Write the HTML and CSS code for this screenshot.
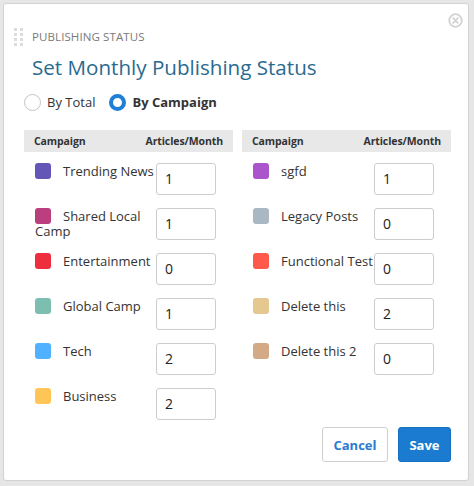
FILE: index.html
```html
<!DOCTYPE html>
<html>
<head>
<meta charset="utf-8">
<link rel="stylesheet" href="styles.css">
</head>
<body>
<div class="dialog">
  <button class="close" aria-label="Close">
    <svg width="15" height="15" viewBox="0 0 15 15"><circle cx="7.5" cy="7.5" r="6.3" fill="none" stroke="#d2d2d2" stroke-width="1.8"/><path d="M5.2 5.2 L9.8 9.8 M9.8 5.2 L5.2 9.8" stroke="#d2d2d2" stroke-width="1.8" stroke-linecap="round"/></svg>
  </button>
  <div class="head">
    <div class="handle"><i></i><i></i><i></i><i></i><i></i><i></i><i></i><i></i></div>
    <div class="kicker">PUBLISHING STATUS</div>
  </div>
  <h1 class="title">Set Monthly Publishing Status</h1>
  <div class="radios">
    <label class="radio"><span class="dot"></span>By Total</label>
    <label class="radio on"><span class="dot"></span>By Campaign</label>
  </div>
  <div class="tables">
    <div class="table">
      <div class="thead"><span>Campaign</span><span>Articles/Month</span></div>
      <div class="row"><div class="name"><span class="sw" style="background:#6356b6"></span>Trending News</div><div class="inp">1</div></div>
      <div class="row"><div class="name"><span class="sw" style="background:#bb3f7e"></span>Shared Local Camp</div><div class="inp">1</div></div>
      <div class="row"><div class="name"><span class="sw" style="background:#ee2e3e"></span>Entertainment</div><div class="inp">0</div></div>
      <div class="row"><div class="name"><span class="sw" style="background:#7cbfb1"></span>Global Camp</div><div class="inp">1</div></div>
      <div class="row"><div class="name"><span class="sw" style="background:#4fb1ff"></span>Tech</div><div class="inp">2</div></div>
      <div class="row"><div class="name"><span class="sw" style="background:#ffc657"></span>Business</div><div class="inp">2</div></div>
    </div>
    <div class="table">
      <div class="thead"><span>Campaign</span><span>Articles/Month</span></div>
      <div class="row"><div class="name"><span class="sw" style="background:#aa55cc"></span>sgfd</div><div class="inp">1</div></div>
      <div class="row"><div class="name"><span class="sw" style="background:#a9b8c2"></span>Legacy Posts</div><div class="inp">0</div></div>
      <div class="row"><div class="name"><span class="sw" style="background:#ff594b"></span>Functional Test</div><div class="inp">0</div></div>
      <div class="row"><div class="name"><span class="sw" style="background:#e5c790"></span>Delete this</div><div class="inp">2</div></div>
      <div class="row"><div class="name"><span class="sw" style="background:#d4aa86"></span>Delete this 2</div><div class="inp">0</div></div>
    </div>
  </div>
  <div class="footer">
    <button class="btn cancel">Cancel</button>
    <button class="btn save">Save</button>
  </div>
</div>
</body>
</html>
```

FILE: styles.css
```css
* { box-sizing: border-box; }
html, body { margin: 0; padding: 0; }
body {
  background: #e6e6e6;
  font-family: "Open Sans", "Liberation Sans", sans-serif;
  color: #333;
  width: 474px;
  height: 486px;
  overflow: hidden;
}
.dialog {
  position: relative;
  margin: 3px 0 0 3px;
  width: 466px;
  height: 478px;
  background: #fff;
  border: 1px solid #d2d2d2;
  border-radius: 3px;
  padding: 23px 17px 0 20px;
}
.close {
  position: absolute;
  top: 9px;
  right: 5px;
  border: 0;
  background: none;
  padding: 0;
  width: 15px;
  height: 15px;
  cursor: pointer;
}
.close svg { display: block; }
.head {
  display: flex;
  align-items: center;
  margin-left: -10px;
  height: 19px;
}
.handle {
  display: grid;
  grid-template-columns: 3px 3px;
  grid-auto-rows: 3px;
  column-gap: 3px;
  row-gap: 2px;
  width: 9px;
  margin-right: 9px;
}
.handle i { display: block; background: #dcdcdc; }
.kicker {
  font-size: 11.5px;
  line-height: 14px;
  color: #7a7a7a;
  letter-spacing: 0.1px;
}
.title {
  margin: 9px 0 0 8px;
  font-size: 20.6px;
  font-weight: 400;
  color: #2a6a8f;
  line-height: 24px;
}
.radios {
  display: flex;
  gap: 14px;
  margin-top: 13px;
  height: 20px;
  align-items: center;
}
.radio {
  display: flex;
  align-items: center;
  gap: 6px;
  font-size: 13px;
  line-height: 16px;
  color: #333;
}
.radio .dot {
  width: 17px;
  height: 17px;
  border-radius: 50%;
  border: 1px solid #c4c4c4;
  background: #fff;
}
.radio.on { font-weight: 700; }
.radio.on .dot { border: 4px solid #1f7fd6; }
.tables {
  display: flex;
  gap: 9px;
  margin-top: 18px;
}
.table { width: 209px; }
.thead {
  display: flex;
  justify-content: space-between;
  align-items: center;
  height: 22px;
  background: #e8e8e8;
  padding: 0 10px 0 10px;
  font-size: 10.5px;
  font-weight: 700;
  color: #333;
  letter-spacing: -0.1px;
}
.row {
  display: flex;
  align-items: flex-start;
  height: 45px;
  padding: 11px 0 0 11px;
}
.name {
  width: 121px;
  font-size: 13px;
  line-height: 15px;
  color: #333;
}
.sw {
  display: inline-block;
  width: 16px;
  height: 16px;
  border-radius: 3px;
  vertical-align: -3px;
  margin-right: 12px;
}
.inp {
  width: 60px;
  height: 32px;
  border: 1px solid #cdcdcd;
  border-radius: 3px;
  font-size: 14px;
  line-height: 30px;
  padding-left: 8px;
  color: #222;
}
.footer {
  display: flex;
  justify-content: flex-end;
  gap: 10px;
  margin-top: 5px;
}
.btn {
  height: 35px;
  border-radius: 3px;
  font-family: "Open Sans", "Liberation Sans", sans-serif;
  font-size: 13px;
  font-weight: 700;
  padding: 0;
  cursor: pointer;
}
.cancel {
  width: 66px;
  background: #fff;
  border: 1px solid #cfcfcf;
  color: #2a7bd1;
}
.save {
  width: 53px;
  background: #1a7bd1;
  border: 1px solid #1770c0;
  color: #fff;
}
```
